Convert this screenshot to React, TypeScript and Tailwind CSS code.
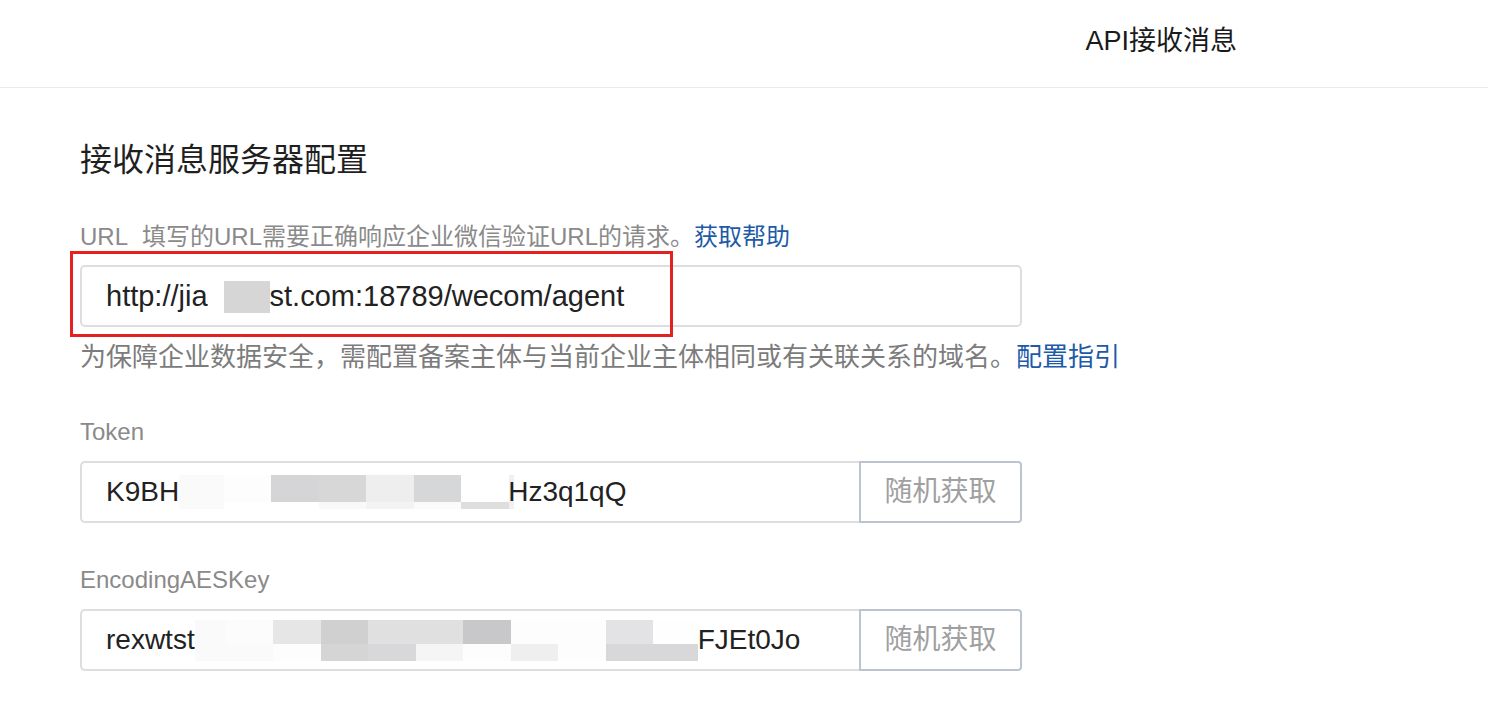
type Cell = { w: number; top: string; bottom: string }

const tokenCells: Cell[] = [
  { w: 45, top: "#fafafa", bottom: "#fafafa" },
  { w: 47, top: "#fdfdfd", bottom: "#ffffff" },
  { w: 48, top: "#d5d5d7", bottom: "#ffffff" },
  { w: 47, top: "#d7d7d8", bottom: "#f9f9f9" },
  { w: 48, top: "#edeeed", bottom: "#f3f3f3" },
  { w: 47, top: "#d6d7d9", bottom: "#fbfbfb" },
  { w: 48, top: "#ffffff", bottom: "#dedede" },
  { w: 5, top: "#f0f0f0", bottom: "#f0f0f0" },
]

const aesCells: Cell[] = [
  { w: 31, top: "#fafafa", bottom: "#fafafa" },
  { w: 47, top: "#fcfcfc", bottom: "#fafafa" },
  { w: 48, top: "#e6e6e6", bottom: "#fdfdfd" },
  { w: 47, top: "#d0d0d0", bottom: "#d5d5d5" },
  { w: 48, top: "#e0e0e0", bottom: "#d8d8da" },
  { w: 47, top: "#dfe0df", bottom: "#f5f5f5" },
  { w: 48, top: "#c8c8ca", bottom: "#fdfdfd" },
  { w: 47, top: "#fdfdfd", bottom: "#efefef" },
  { w: 48, top: "#fdfdfd", bottom: "#fdfdfd" },
  { w: 47, top: "#e3e3e5", bottom: "#d8d8da" },
  { w: 45, top: "#fefefe", bottom: "#d8d8da" },
]

function Mosaic({ cells, topH, bottomH }: { cells: Cell[]; topH: number; bottomH: number }) {
  return (
    <span className="inline-flex shrink-0">
      {cells.map((c, i) => (
        <span key={i} className="flex flex-col" style={{ width: c.w }}>
          <span style={{ height: topH, background: c.top }} />
          <span style={{ height: bottomH, background: c.bottom }} />
        </span>
      ))}
    </span>
  )
}

function RandomButton() {
  return (
    <div className="flex h-full w-[163px] shrink-0 items-center justify-center rounded-r-[4px] border-2 border-[#bcc5cf] text-[28px] text-[#a0a0a0]">
      随机获取
    </div>
  )
}

export default function App() {
  return (
    <div className="min-h-[710px] bg-white font-['Liberation_Sans','Noto_Sans_CJK_SC',sans-serif] text-[#222]">
      <div className="flex h-[88px] items-center justify-end border-b border-[#ebebeb] pb-[4px] pr-[251px]">
        <span className="text-[27px] text-[#1a1a1a]">API接收消息</span>
      </div>

      <div className="pl-[80px]">
        <h1 className="mt-[50px] text-[32px] leading-[44px] text-[#1f1f1f]">接收消息服务器配置</h1>

        <div className="mt-[37px] flex h-[36px] items-center text-[24px] text-[#8a8a8a]">
          <span className="mr-[14px]">URL</span>
          <span>填写的URL需要正确响应企业微信验证URL的请求。</span>
          <span className="text-[#1d5aa8]">获取帮助</span>
        </div>

        <div className="relative mt-[10px] w-[942px]">
          <div className="flex h-[62px] items-center rounded-[5px] border-2 border-[#dedede] pl-[24px] pt-[2px] text-[29px]">
            <span>http://jia</span>
            <span className="ml-[16px] h-[32px] w-[46px] bg-[#d6d6d6]" />
            <span>st.com:18789/wecom/agent</span>
          </div>
          <div className="pointer-events-none absolute -left-[10px] -top-[14px] h-[86px] w-[603px] border-[3px] border-[#e5211f]" />
        </div>

        <div className="mt-[12px] flex h-[36px] items-center text-[26px] text-[#7c7c7c]">
          <span>为保障企业数据安全，需配置备案主体与当前企业主体相同或有关联关系的域名。</span>
          <span className="text-[#1d5aa8]">配置指引</span>
        </div>

        <div className="mt-[39px] flex h-[36px] items-center text-[24px] text-[#8a8a8a]">Token</div>
        <div className="mt-[11px] flex h-[62px] w-[942px]">
          <div className="flex flex-1 items-center overflow-hidden rounded-l-[5px] border-2 border-r-0 border-[#dedede] pl-[24px] text-[28px]">
            <span>K9BH</span>
            <Mosaic cells={tokenCells} topH={27} bottomH={7} />
            <span className="-ml-[6px]">Hz3q1qQ</span>
          </div>
          <RandomButton />
        </div>

        <div className="mt-[39px] flex h-[36px] items-center text-[24px] text-[#8a8a8a]">EncodingAESKey</div>
        <div className="mt-[11px] flex h-[62px] w-[942px]">
          <div className="flex flex-1 items-center overflow-hidden rounded-l-[5px] border-2 border-r-0 border-[#dedede] pl-[24px] text-[28px]">
            <span>rexwtst</span>
            <Mosaic cells={aesCells} topH={24} bottomH={17} />
            <span>FJEt0Jo</span>
          </div>
          <RandomButton />
        </div>
      </div>
    </div>
  )
}
